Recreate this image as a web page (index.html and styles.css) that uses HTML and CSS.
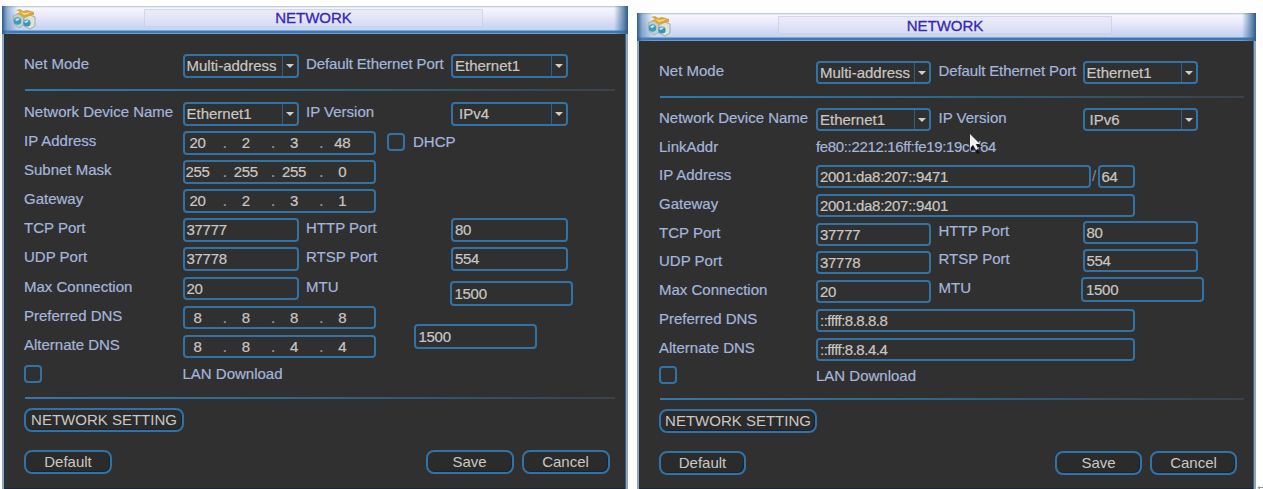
FILE: index.html
```
<!DOCTYPE html>
<html lang="en">
<head>
    <meta charset="UTF-8">
    <meta name="viewport" content="width=device-width, initial-scale=1.0">
    <title>Network</title>
    <link rel="stylesheet" href="styles.css">
</head>
<body>
    <svg class="defs" width="0" height="0">
        <symbol id="net-icon" viewBox="0 0 24 22">
            <path d="M1 8l7-3 4 3v9l-5 3-5-4z" fill="#c3cfcf" stroke="#8fa3a2" stroke-width=".7"/>
            <path d="M12 10l6-3 5 2v9l-5 3-6-3z" fill="#dfe3dc" stroke="#8b958c" stroke-width=".7"/>
            <circle cx="5.500" cy="13" r="3.800" fill="#3f9dbb"/>
            <path d="M3 12q2-3 5-1l-3 2z" fill="#c8edf1"/>
            <circle cx="15" cy="15" r="3.600" fill="#3a93b8"/>
            <path d="M12 14q3-3 5-1l-3 2z" fill="#c8edf1"/>
            <path d="M4 2l4-1 3 2 4-1 7 2v3l-5 1-5 2-4-3-4-1 4-2z" fill="#d9a640"/>
            <path d="M8 4l5 1 6-1-3 2-4 1z" fill="#f6dc7c"/>
        </symbol>
    </svg>

    <div class="window first">
        <div class="titlebar">
            <svg class="icon"><use href="#net-icon"/></svg>
            <div class="title">NETWORK</div>
        </div>
        <div class="content">
            <div class="grid mode">
                <label>Net Mode</label>
                <div class="select">Multi-address<i></i></div>
                <label class="tight">Default Ethernet Port</label>
                <div class="select">Ethernet1<i></i></div>
            </div>
            <div class="line"></div>
            <div class="grid">
                <label>Network Device Name</label>
                <div class="select">Ethernet1<i></i></div>
                <label>IP Version</label>
                <div class="select indent">IPv4<i></i></div>

                <label>IP Address</label>
                <div class="span">
                    <div class="field ip"><span>20</span><b>.</b><span>2</span><b>.</b><span>3</span><b>.</b><span>48</span></div>
                    <div class="checkbox"></div>
                    <label class="dhcp">DHCP</label>
                </div>

                <label>Subnet Mask</label>
                <div class="span">
                    <div class="field ip"><span>255</span><b>.</b><span>255</span><b>.</b><span>255</span><b>.</b><span>0</span></div>
                </div>

                <label>Gateway</label>
                <div class="span">
                    <div class="field ip"><span>20</span><b>.</b><span>2</span><b>.</b><span>3</span><b>.</b><span>1</span></div>
                </div>

                <label>TCP Port</label>
                <div class="field">37777</div>
                <label>HTTP Port</label>
                <div class="field">80</div>

                <label>UDP Port</label>
                <div class="field">37778</div>
                <label>RTSP Port</label>
                <div class="field">554</div>

                <label>Max Connection</label>
                <div class="field">20</div>
                <label>MTU</label>
                <div class="field mtu">1500</div>

                <label>Preferred DNS</label>
                <div class="field ip"><span>8</span><b>.</b><span>8</span><b>.</b><span>8</span><b>.</b><span>8</span></div>
                <div class="field mtu extra">1500</div>

                <label>Alternate DNS</label>
                <div class="field ip"><span>8</span><b>.</b><span>8</span><b>.</b><span>4</span><b>.</b><span>4</span></div>

                <div class="checkbox"></div>
                <label class="span">LAN Download</label>
            </div>
            <div class="line"></div>
            <button class="setting">NETWORK SETTING</button>
            <div class="buttons">
                <button>Default</button>
                <button class="save">Save</button>
                <button>Cancel</button>
            </div>
        </div>
    </div>

    <div class="window second">
        <div class="titlebar">
            <svg class="icon"><use href="#net-icon"/></svg>
            <div class="title">NETWORK</div>
        </div>
        <div class="content">
            <div class="grid mode">
                <label>Net Mode</label>
                <div class="select">Multi-address<i></i></div>
                <label class="tight">Default Ethernet Port</label>
                <div class="select">Ethernet1<i></i></div>
            </div>
            <div class="line"></div>
            <div class="grid">
                <label>Network Device Name</label>
                <div class="select">Ethernet1<i></i></div>
                <label>IP Version</label>
                <div class="select indent">IPv6<i></i></div>

                <label>LinkAddr</label>
                <div class="span link">
                    fe80::2212:16ff:fe19:19cc/64
                    <svg class="cursor" width="14" height="22" viewBox="0 0 14 22">
                        <path d="M2 2v15l3-3 3 6 3-1-3-6h5z" fill="#151515"/>
                        <path d="M1 0v14l3-3 3 5 2-1-2-5h4z" fill="#f0f0f0"/>
                    </svg>
                </div>

                <label>IP Address</label>
                <div class="span">
                    <div class="field address">2001:da8:207::9471</div>
                    <div class="slash">/</div>
                    <div class="field prefix">64</div>
                </div>

                <label>Gateway</label>
                <div class="span"><div class="field wide">2001:da8:207::9401</div></div>

                <label>TCP Port</label>
                <div class="field">37777</div>
                <label class="up">HTTP Port</label>
                <div class="field up">80</div>

                <label>UDP Port</label>
                <div class="field">37778</div>
                <label class="up">RTSP Port</label>
                <div class="field up">554</div>

                <label>Max Connection</label>
                <div class="field">20</div>
                <label class="up">MTU</label>
                <div class="field mtu">1500</div>

                <label>Preferred DNS</label>
                <div class="span"><div class="field wide dns">::ffff:8.8.8.8</div></div>

                <label>Alternate DNS</label>
                <div class="span"><div class="field wide dns">::ffff:8.8.4.4</div></div>

                <div class="checkbox"></div>
                <label class="span">LAN Download</label>
            </div>
            <div class="line"></div>
            <button class="setting">NETWORK SETTING</button>
            <div class="buttons">
                <button>Default</button>
                <button class="save">Save</button>
                <button>Cancel</button>
            </div>
        </div>
    </div>
    <svg class="mark" width="6" height="4" viewBox="0 0 6 4">
        <path d="M0 3l3-2v1h3v1H3v1z" fill="#8f949c"/>
    </svg>
</body>
</html>
```
FILE: styles.css
```
* {
    box-sizing: border-box;
}
body {
    margin: 0;
    height: 489px;
    overflow: hidden;
    background-color: #fefefe;
    font-family: "Liberation Sans", Arial, sans-serif;
    font-size: 15px;
    display: flex;
    align-items: flex-start;
    gap: 9px;
    padding-left: 2px;
}
.defs {
    position: absolute;
}
.mark {
    flex: none;
    align-self: flex-end;
    margin-left: -8px;
}
.window {
    flex: none;
    display: flex;
    flex-direction: column;
}
.first {
    --row: 29.1px;
    --field: 23.5px;
    width: 626px;
    height: 483px;
    margin-top: 6px;
}
.second {
    --row: 28.7px;
    --field: 23px;
    width: 618.5px;
    height: 476px;
    margin-top: 13px;
}
.titlebar {
    flex: none;
    height: 28px;
    display: flex;
    align-items: flex-start;
    padding-left: 10px;
    background: linear-gradient(to right, #2f5c8c 0, rgba(80, 130, 185, 0.6) 5px, transparent 16px, transparent calc(100% - 14px), rgba(60, 110, 160, 0.7) calc(100% - 5px), #2d5b86 100%),
        linear-gradient(#b4c2cc 0, #f6f6fe 2px, #e9eafa 10px, #d0d8f2 19px, #c2d6f0 24px, #3f77b5 25px, #3f77b5 27px, #a6c4e0 28px);
}
.icon {
    width: 24px;
    height: 22px;
    margin-top: 2px;
}
.title {
    width: 339px;
    height: 18px;
    margin: 3px 0 0 108px;
    border: 1px solid rgba(190, 195, 220, 0.5);
    background-color: rgba(225, 228, 245, 0.5);
    color: #3626b4;
    text-align: center;
    line-height: 16px;
    -webkit-text-stroke: 0.3px #3626b4;
}
.second .title {
    width: 334px;
    margin-left: 107px;
    line-height: 18px;
}
.content {
    flex: 1;
    background-color: #303030;
    border: solid #8fa6bb;
    border-width: 0 2px 0 2px;
    box-shadow: inset 1px 0 #1d3149, inset -1px 0 #3d5f88, inset 0 -1px #1c2540;
    padding: 20px 0 0 20px;
}
.grid {
    display: grid;
    grid-template-columns: 158.5px 123.5px 145px 130px;
    grid-auto-rows: var(--row);
    align-items: start;
    height: 296px;
}
.second .grid {
    grid-template-columns: 157px 122.5px 144px 130px;
    height: 291px;
}
.first .mode,
.second .mode {
    height: 36px;
}
label,
.link {
    color: #a5b6dc;
    line-height: 18px;
    margin-top: 1px;
    white-space: nowrap;
    -webkit-text-stroke: 0.2px #a5b6dc;
}
.tight {
    letter-spacing: -0.12px;
}
.span {
    grid-column: 2 / -1;
    display: flex;
}
.link {
    position: relative;
    letter-spacing: -0.35px;
}
.cursor {
    position: absolute;
    left: 153px;
    top: -4px;
}
.field,
.select {
    height: var(--field);
    width: 116.5px;
    border: 2px solid #3173a6;
    border-radius: 4px;
    padding-left: 2px;
    color: #c9c7c4;
    line-height: 19.5px;
    white-space: nowrap;
    -webkit-text-stroke: 0.2px #c9c7c4;
}
.field {
    letter-spacing: -0.3px;
}
.second .field,
.second .select {
    width: 115px;
}
.select {
    display: flex;
    justify-content: space-between;
}
.indent {
    padding-left: 6px;
}
.second .indent {
    padding-left: 5px;
}
.select i {
    width: 15px;
    border-left: 1px solid #2c5f88;
    display: flex;
    align-items: center;
    justify-content: center;
}
.select i::before {
    content: "";
    border: 4px solid transparent;
    border-top: 4px solid #d5cdc2;
    border-bottom: none;
}
.first .ip {
    width: 193.5px;
    display: flex;
    padding: 0;
}
.ip span {
    width: 28px;
    margin-left: -1px;
    text-align: center;
}
.ip b {
    width: 21.25px;
    padding-left: 5px;
    text-align: center;
    font-weight: normal;
    color: #92908c;
}
.checkbox {
    flex: none;
    width: 18px;
    height: 18px;
    border: 2px solid #3173a6;
    border-radius: 4px;
    margin-top: 1px;
}
.second .checkbox {
    margin-top: 0;
}
.span .checkbox {
    margin-left: 11px;
    margin-top: 2px;
}
.dhcp {
    margin: 2px 0 0 8px;
}
.first .mtu,
.second .mtu {
    width: 123px;
    height: 25px;
    margin: 4px 0 0 -1.5px;
    line-height: 21px;
    padding-left: 3px;
}
.second .mtu {
    margin-top: -3px;
}
/* hangs between the two DNS rows */
.first .extra {
    grid-column: 3 / 5;
    grid-row: 8 / 10;
    margin: 18.5px 0 0 107.5px;
}
.up {
    margin-top: -2px;
}
label.up {
    margin-top: -1px;
}
.second .address {
    width: 274.5px;
}
.slash {
    width: 7px;
    color: #8c8c8c;
    line-height: 22px;
    text-align: center;
}
.second .prefix {
    width: 37px;
}
.second .wide {
    width: 318.5px;
}
.dns {
    letter-spacing: -0.5px;
}
.line {
    height: 2px;
    width: 590px;
    margin: -1px 0 11px 1px;
    background: linear-gradient(to right, #3279ae, #2d6587 50%, #3b414b);
}
.first .grid + .line + .setting {
    margin-top: -2px;
}
.second .line {
    width: 584px;
    margin-bottom: 10px;
}
.second .grid + .line + .setting {
    margin-top: -1.5px;
}
button {
    width: 88px;
    height: 24px;
    border: 2px solid #3173a6;
    border-radius: 8px;
    background-color: #2b2b2c;
    box-shadow: inset -1px -1px #14233a;
    color: #c9c7c4;
    font: inherit;
    line-height: 18px;
    padding: 0;
}
.setting {
    display: block;
    width: 160px;
}
.second .setting {
    width: 158px;
}
.buttons {
    display: flex;
    gap: 8px;
    margin-top: 18px;
}
.save {
    margin-left: 305.5px;
}
.second .save {
    margin-left: 301px;
}
.second .buttons button {
    width: 87px;
}
```
